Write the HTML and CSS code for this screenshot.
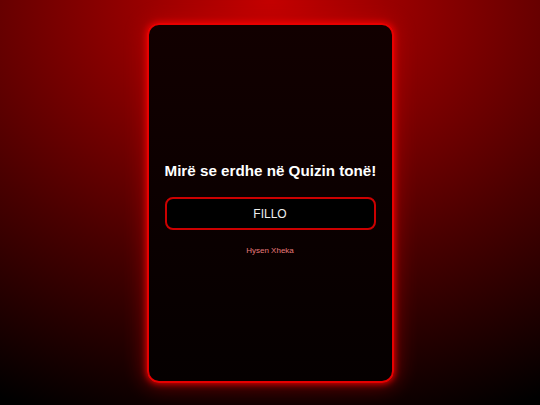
FILE: index.html
```html
<!DOCTYPE html>
<html>
<head>
<meta charset="utf-8">
<link rel="stylesheet" href="styles.css">
</head>
<body>
<div class="page">
  <div class="card">
    <h1 class="title">Mirë se erdhe në Quizin tonë!</h1>
    <button class="start">FILLO</button>
    <p class="author">Hysen Xheka</p>
  </div>
</div>
</body>
</html>
```
FILE: styles.css
```css
html, body {
  margin: 0;
  padding: 0;
  height: 100%;
}
body {
  font-family: "Liberation Sans", Arial, sans-serif;
  background: radial-gradient(ellipse 110% 110% at 50% 0%, #c40000 0%, #900000 25%, #4a0000 60%, #000 100%);
  background-color: #000;
}
.page {
  height: 405px;
  display: flex;
  align-items: center;
  justify-content: center;
}
.card {
  box-sizing: border-box;
  width: 247px;
  height: 360px;
  border: 2px solid #e60000;
  border-radius: 12px;
  background: linear-gradient(to bottom, #120000 0%, #050000 100%);
  box-shadow: 0 0 6px 1px rgba(255, 0, 0, 0.8), 0 0 20px 4px rgba(200, 0, 0, 0.45);
  padding: 0 16px;
  display: flex;
  flex-direction: column;
  align-items: stretch;
  justify-content: center;
}
.title {
  margin: 12px 0 0;
  color: #fff;
  font-size: 15.2px;
  font-weight: bold;
  text-align: center;
  line-height: 20px;
  white-space: nowrap;
}
.start {
  margin-top: 16px;
  height: 33px;
  border: 2px solid #cc0000;
  border-radius: 8px;
  background: #000;
  color: #eee;
  font-family: "Liberation Sans", Arial, sans-serif;
  font-size: 12px;
  padding: 0;
}
.author {
  margin: 16px 0 0;
  text-align: center;
  color: #e87a7a;
  font-size: 8px;
  line-height: 10px;
}
```
